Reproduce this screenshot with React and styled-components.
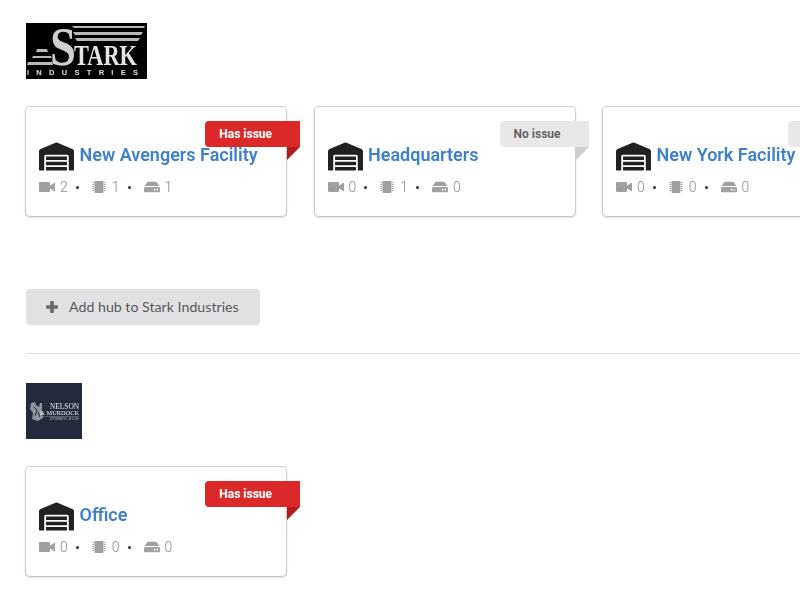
import React from 'react';
import styled, { createGlobalStyle } from 'styled-components';
import { FaWarehouse, FaHdd } from 'react-icons/fa';

const GlobalStyle = createGlobalStyle`
  html, body {
    margin: 0;
    padding: 0;
    height: 600px;
    overflow: hidden;
    background: #fff;
    font-family: 'Roboto', 'Liberation Sans', sans-serif;
  }
`;

const Page = styled.div`
  padding: 23px 0 0 26px;
  width: 774px;
  overflow: hidden;
  transform: translateZ(0);
`;

const LogoBox = styled.div`
  display: block;
  line-height: 0;
  filter: blur(0.35px);
`;

const CardRow = styled.div`
  display: flex;
  gap: 28.5px;
  margin-top: 28px;
  padding: 0 0 4px 0;
  margin-right: -40px;
`;

const Card = styled.div`
  position: relative;
  flex: 0 0 260px;
  box-sizing: border-box;
  height: 109px;
  padding: 35px 0 0 13px;
  background: #fff;
  border-radius: 4px;
  box-shadow: 0 1px 3px 0 #bcbdbd, 0 0 0 1px #d4d4d5;
`;

const Ribbon = styled.div`
  position: absolute;
  top: 14px;
  right: -14px;
  height: 26px;
  padding: 0 28px 0 14px;
  line-height: 26px;
  font-size: 12px;
  font-weight: 700;
  color: ${({ $issue }) => ($issue ? '#fff' : 'rgba(0,0,0,.6)')};
  background: ${({ $issue }) => ($issue ? '#db2828' : '#e8e8e8')};
  border-radius: 4px 0 0 4px;

  &::after {
    content: '';
    position: absolute;
    top: 100%;
    right: 0;
    border-style: solid;
    border-width: 13px 13px 0 0;
    border-color: ${({ $issue }) => ($issue ? '#b21e1e' : '#cfcfcf')} transparent transparent transparent;
  }
`;

const TitleRow = styled.div`
  display: flex;
  align-items: center;
  height: 28px;
  color: #212121;
  font-size: 0;
`;

const Title = styled.span`
  margin: -2px 0 0 5.5px;
  font-size: 18px;
  font-weight: 600;
  color: #3f80c6;
  white-space: nowrap;
  line-height: 26px;
`;

const Stats = styled.div`
  display: flex;
  align-items: center;
  margin-top: 8px;
  height: 18px;
  font-size: 14px;
  font-weight: 300;
  color: #8c8c8c;
`;

const Stat = styled.span`
  display: inline-flex;
  align-items: center;
  gap: ${({ $gap }) => $gap}px;
  svg {
    color: #a0a0a0;
    fill: #a0a0a0;
  }
`;

const Dot = styled.span`
  width: 3px;
  height: 3px;
  margin: 0 13px 0 8px;
  border-radius: 50%;
  background: #333;
`;

const AddButton = styled.button`
  display: flex;
  align-items: center;
  width: 234px;
  height: 36px;
  margin-top: 69px;
  padding: 0 0 0 20px;
  border: none;
  border-radius: 4px;
  background: #e0e1e2;
  color: rgba(0, 0, 0, .65);
  font-family: 'Lato', sans-serif;
  font-size: 14.2px;
  font-weight: 400;
  svg {
    margin-right: 11px;
    fill: #6b6b6c;
  }
`;

const AddLabel = styled.span`
  margin-top: -2px;
`;

const Divider = styled.hr`
  height: 1px;
  margin: 28px 0 29px;
  border: none;
  background: #dedede;
`;

const PlusIcon = () => (
  <svg width="12" height="12" viewBox="0 0 12 12">
    <rect x="4.2" width="3.6" height="12" rx="0.8" />
    <rect y="4.2" width="12" height="3.6" rx="0.8" />
  </svg>
);

const VideoIcon = () => (
  <svg width="16" height="10" viewBox="0 0 16 10">
    <rect width="11" height="10" rx="1" />
    <polygon points="11,3.5 16,0.5 16,9.5 11,6.5" />
  </svg>
);

const ChipIcon = () => (
  <svg width="14" height="12" viewBox="0 0 14 12">
    <rect x="2.5" width="9" height="12" rx="1" />
    {[1, 3, 5, 7, 9].map((y) => (
      <g key={y}>
        <rect x="0.5" y={y} width="1.5" height="1" />
        <rect x="12" y={y} width="1.5" height="1" />
      </g>
    ))}
  </svg>
);

const StarkLogo = () => (
  <svg width="121" height="56" viewBox="0 0 121 56">
    <rect width="121" height="56" fill="#000" />
    <g fill="#b8b8b8">
      <polygon points="46,3 119,3 118,5 48,5" />
      <polygon points="47,9 117,9 115,12 49,12" />
      <polygon points="49,15 114,15 112,18 51,18" />
      <polygon points="11,26 21,26 22,29 10,29" />
      <polygon points="7,33 25,33 26,35 6,35" />
      <polygon points="2,39 26,39 27,42 1,42" />
    </g>
    <text x="24" y="42" fontFamily="Liberation Serif, serif" fontWeight="700" fontSize="54" fill="#cfcfcf" textLength="26" lengthAdjust="spacingAndGlyphs">S</text>
    <text x="48" y="42" fontFamily="Liberation Serif, serif" fontWeight="700" fontSize="29" fill="#e4e4e4" textLength="63" lengthAdjust="spacingAndGlyphs">TARK</text>
    <text x="1" y="52" fontFamily="Liberation Sans, sans-serif" fontWeight="700" fontSize="7.5" fill="#e0e0e0" textLength="111">INDUSTRIES</text>
  </svg>
);

const NelsonLogo = () => (
  <svg width="56" height="56" viewBox="0 0 56 56">
    <rect width="56" height="56" fill="#232a3b" />
    <path
      d="M5 20 L9 19 L10 22 L13 24 L14 20 L16 20 L16 28 L17 35 L12 38 L6 36 L7 30 L4 26 Z"
      fill="#8f94a0"
    />
    <path d="M8 24 L11 27 L9 33 M12 29 L14 34" fill="none" stroke="#232a3b" strokeWidth="1" />
    <text x="24" y="26" fontFamily="Liberation Serif, serif" fontSize="8" fill="#eeeeee" textLength="29" lengthAdjust="spacingAndGlyphs">NELSON</text>
    <text x="14" y="32" fontFamily="Liberation Serif, serif" fontSize="7" fill="#eeeeee" textLength="39" lengthAdjust="spacingAndGlyphs">&amp; MURDOCK</text>
    <rect x="14" y="33" width="39" height="0.4" fill="#9a9da6" />
    <text x="23" y="37" fontFamily="Liberation Serif, serif" fontSize="3" fill="#c4c6cc" textLength="30" lengthAdjust="spacingAndGlyphs">ATTORNEYS AT LAW</text>
  </svg>
);

const Hub = ({ name, issue, cams, chips, drives }) => (
  <Card>
    <Ribbon $issue={issue}>{issue ? 'Has issue' : 'No issue'}</Ribbon>
    <TitleRow>
      <FaWarehouse size={35} />
      <Title>{name}</Title>
    </TitleRow>
    <Stats>
      <Stat $gap={5}><VideoIcon />{cams}</Stat>
      <Dot />
      <Stat $gap={6}><ChipIcon />{chips}</Stat>
      <Dot />
      <Stat $gap={5}><FaHdd size={16} />{drives}</Stat>
    </Stats>
  </Card>
);

const App = () => (
  <Page>
    <GlobalStyle />
    <LogoBox><StarkLogo /></LogoBox>
    <CardRow>
      <Hub name="New Avengers Facility" issue cams={2} chips={1} drives={1} />
      <Hub name="Headquarters" cams={0} chips={1} drives={0} />
      <Hub name="New York Facility" cams={0} chips={0} drives={0} />
    </CardRow>
    <AddButton><PlusIcon /><AddLabel>Add hub to Stark Industries</AddLabel></AddButton>
    <Divider />
    <LogoBox><NelsonLogo /></LogoBox>
    <CardRow>
      <Hub name="Office" issue cams={0} chips={0} drives={0} />
    </CardRow>
  </Page>
);

export default App;
